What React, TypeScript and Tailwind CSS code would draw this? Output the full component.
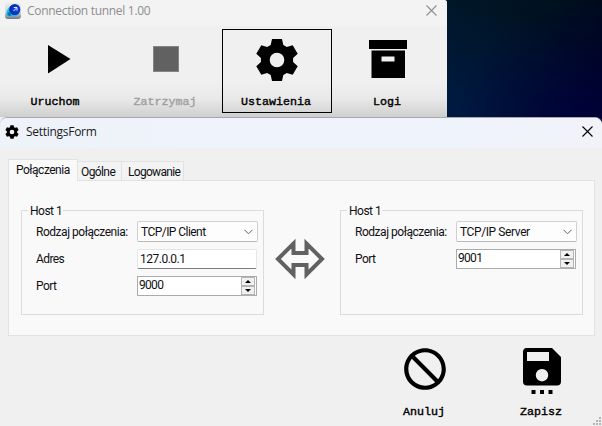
import type { ReactNode } from "react";
import { MdBlock } from "react-icons/md";

const label = "font-[Roboto,sans-serif] text-[12px] leading-[14px] text-[#101014] whitespace-nowrap";

function CloseIcon({ className }: { className: string }) {
  return (
    <svg width="11" height="11" viewBox="0 0 11 11" className={className} fill="none" stroke="currentColor" strokeWidth="1.1">
      <path d="M0.5 0.5l10 10M10.5 0.5l-10 10" />
    </svg>
  );
}

function Gear({ size }: { size: number }) {
  return (
    <svg width={size} height={size} viewBox="-25 -25 50 50" className="shrink-0">
      <path
        fillRule="evenodd"
        d="M-5-21H5L6.300-15L9.800-13L15.700-14.800L20.700-6.200L16.100-2V2L20.700 6.200L15.700 14.800L9.800 13L6.300 15L5 21H-5L-6.300 15L-9.800 13L-15.700 14.800L-20.700 6.200L-16.100 2V-2L-20.700-6.200L-15.700-14.800L-9.800-13L-6.300-15zM7.300 0a7.300 7.300 0 1 0-14.600 0a7.300 7.300 0 1 0 14.600 0z"
      />
    </svg>
  );
}

function AppIcon() {
  return (
    <svg width="16" height="16" viewBox="0 0 16 16" className="shrink-0">
      <defs>
        <linearGradient id="base" x1="0" y1="0" x2="0" y2="1">
          <stop offset="0" stopColor="#e9ecf0" />
          <stop offset="0.6" stopColor="#cfd4d8" />
          <stop offset="1" stopColor="#70767c" />
        </linearGradient>
        <radialGradient id="orb" cx="0.6" cy="0.5" r="0.6">
          <stop offset="0" stopColor="#1450e8" />
          <stop offset="1" stopColor="#0522a0" />
        </radialGradient>
      </defs>
      <rect width="16" height="16" rx="3" fill="url(#base)" />
      <path d="M5.500 3C2.500 5 0.800 9.500 1.500 12c2 2.500 10 2 12.500-1z" fill="#18b9ea" />
      <circle cx="9.800" cy="6.500" r="5.500" fill="url(#orb)" />
      <circle cx="4.500" cy="11" r="2" fill="#0877b8" />
      <path d="M8.500 8l3-3M8.800 4.500H12v3" stroke="#d7e8ff" strokeWidth="1" fill="none" />
    </svg>
  );
}

function ToolButton({ text, children, className = "", textClass = "" }: { text: string; children: ReactNode; className?: string; textClass?: string }) {
  return (
    <button className={`flex h-[84px] w-[110px] shrink-0 flex-col items-center pt-[5px] ${className}`}>
      <span className="flex h-[50px] w-[50px] items-center justify-center">{children}</span>
      <span className={`mt-[10px] font-['Liberation_Mono',monospace] text-[11.67px] leading-[14px] whitespace-nowrap [-webkit-text-stroke:0.4px] ${textClass}`}>{text}</span>
    </button>
  );
}

function Group({ children }: { children: ReactNode }) {
  return (
    <fieldset className="h-[112px] w-[243px] border border-[#dcdcdc]">
      <legend className={`ml-[6px] h-[14px] w-[35px] pt-px pl-[2px] ${label} tracking-[-0.5px]`}>Host 1</legend>
      <div className="flex flex-col gap-[6px] pt-[4px] pl-[14px]">{children}</div>
    </fieldset>
  );
}

function Field({ text, children, tracking = "tracking-[-0.6px]" }: { text: string; children: ReactNode; tracking?: string }) {
  return (
    <div className="flex h-[21px] items-center">
      <span className={`w-[101px] shrink-0 pt-px ${label} ${tracking}`}>{text}</span>
      {children}
    </div>
  );
}

function Select({ text, tracking }: { text: string; tracking: string }) {
  return (
    <div className="flex h-[21px] w-[121px] items-center justify-between rounded-[2px] border border-[#d0d0d0] border-b-[#b9b9b9] bg-[#fdfdfd] pr-[4px] pl-[3px]">
      <span className={`pt-px ${label} ${tracking}`}>{text}</span>
      <svg width="9" height="6" viewBox="0 0 9 6" fill="none" stroke="#606060"><path d="M0.500 0.800L4.500 4.800L8.500 0.800" /></svg>
    </div>
  );
}

function Spin({ down = false }: { down?: boolean }) {
  return (
    <span className="flex h-[9px] w-[14px] items-center justify-center border border-[#b4b4b4] bg-[#f0f0f0]">
      <svg width="6" height="3" viewBox="0 0 6 3"><path d={down ? "M0 0h6L3 3z" : "M0 3h6L3 0z"} /></svg>
    </span>
  );
}

function NumberBox({ value }: { value: string }) {
  return (
    <div className="flex h-[20px] w-[120px] justify-between border border-[#aaaaaf] bg-white pr-px pl-px">
      <span className={`${label} pt-px tracking-[-0.7px]`}>{value}</span>
      <span className="flex flex-col"><Spin /><Spin down /></span>
    </div>
  );
}

export default function App() {
  return (
    <div className="flex h-[426px] w-[602px] flex-col overflow-hidden bg-[#f0f0f0]">
      <div className="flex h-[117px] shrink-0 bg-[#001528]">
        <div className="h-[117px] w-[447px] shrink-0 overflow-hidden rounded-tr-[3px] bg-[#f0f0f0]">
          <div className="flex h-[26px] items-center bg-[#f3f3f3] pr-[10px] pb-[5px] pl-[5px]">
            <AppIcon />
            <span className="ml-[6px] font-['Open_Sans',sans-serif] text-[12px] leading-[18px] tracking-[-0.3px] text-[#8e8e8e]">Connection tunnel 1.00</span>
            <CloseIcon className="ml-auto text-[#8e8e8e]" />
          </div>
          <div className="flex h-[91px] bg-linear-to-b from-[#f0f0f0] from-60% via-[#e9e9e9] via-80% to-[#cfcfcf] pt-[3px]">
            <ToolButton text="Uruchom" className="pt-[6px]">
              <svg width="50" height="50" viewBox="0 0 50 50" className="translate-x-px"><path d="M17 10V38.500L39.500 24z" /></svg>
            </ToolButton>
            <ToolButton text="Zatrzymaj" className="mr-[2px] pt-[6px] text-[#a0a0a0]">
              <span className="mt-[-2px] ml-[2px] block h-[26px] w-[26px] border border-[#858585] bg-[#616161]" />
            </ToolButton>
            <ToolButton text="Ustawienia" className="border border-black" textClass="mr-[2px]"><Gear size={50} /></ToolButton>
            <ToolButton text="Logi" className="pt-[6px]">
              <svg width="50" height="50" viewBox="0 0 50 50"><path fillRule="evenodd" d="M7 5h38v9H7zM9.500 15.500h33.500v27.500H9.500zM19.500 21.500v5h13v-5z" /></svg>
            </ToolButton>
          </div>
        </div>
        <div className="h-[126px] grow bg-[radial-gradient(ellipse_at_90%_105%,#00003c_0%,transparent_70%),radial-gradient(ellipse_at_10%_95%,#001b44_0%,transparent_70%),linear-gradient(105deg,#001728_0%,#00111f_55%,#00051c_100%)]" />
      </div>

      <div className="relative flex h-[309px] shrink-0 flex-col rounded-t-[7px] border-t border-[#a9a9ad] bg-[#f0f0f0]">
        <div className="flex h-[30px] shrink-0 items-center rounded-t-[7px] bg-linear-to-r from-[#eef3fa] via-[#eff3fc] via-75% to-[#f2f3f9] pr-[9px] pb-[3px] pl-[4px]">
          <Gear size={16} />
          <span className="mt-px ml-[6px] font-['Open_Sans',sans-serif] text-[12px] leading-[18px] tracking-[-0.28px] text-[#1b1b1b]">SettingsForm</span>
          <CloseIcon className="ml-auto text-black" />
        </div>

        <div className="flex h-[32px] shrink-0 items-end pl-[8px]">
          <div className={`z-10 mb-[-1px] flex h-[22px] w-[70px] border border-b-0 border-[#e2e2e2] bg-[#f9f9f9] pt-[3px] pl-[7px] ${label} tracking-[-0.5px]`}>Połączenia</div>
          <div className={`flex h-[19px] w-[44px] border border-b-0 border-l-0 border-[#e2e2e2] bg-[#f3f3f3] pt-[3px] pl-[3px] ${label} tracking-[-0.6px]`}>Ogólne</div>
          <div className={`flex h-[19px] w-[62px] border border-b-0 border-l-0 border-[#e2e2e2] bg-[#f3f3f3] pt-[3px] pl-[6px] ${label} tracking-[-0.7px]`}>Logowanie</div>
        </div>

        <div className="ml-[8px] flex h-[156px] w-[587px] shrink-0 border border-[#e2e2e2] bg-[#f9f9f9] pt-[22px] pl-[12px]">
          <Group>
            <Field text="Rodzaj połączenia:" tracking="tracking-[-0.47px]"><Select text="TCP/IP Client" tracking="tracking-[-0.55px]" /></Field>
            <Field text="Adres">
              <div className={`h-[20px] w-[120px] rounded-[2px] border border-[#e5e5e5] border-b-[#7b7b7b] bg-white pt-[2px] pl-[2px] ${label} tracking-[-0.5px]`}>127.0.0.1</div>
            </Field>
            <Field text="Port"><NumberBox value="9000" /></Field>
          </Group>
          <svg width="50" height="42" viewBox="0 0 50 42" className="mt-[35px] mr-[15px] ml-[11px] shrink-0" fill="none" stroke="#616161" strokeWidth="4">
            <path d="M3 21L18.500 5.500V15H31.500V5.500L47 21L31.500 36.500V27H18.500V36.500z" />
          </svg>
          <Group>
            <Field text="Rodzaj połączenia:" tracking="tracking-[-0.47px]"><Select text="TCP/IP Server" tracking="tracking-[-0.4px]" /></Field>
            <Field text="Port"><NumberBox value="9001" /></Field>
          </Group>
        </div>

        <div className="flex grow justify-end pt-[3px] pr-[6px]">
          <ToolButton text="Anuluj" className="mr-[6px]" textClass="pt-px mr-[2px]"><MdBlock size={50} className="-scale-x-100" /></ToolButton>
          <ToolButton text="Zapisz" textClass="pt-px">
            <svg width="50" height="50" viewBox="0 0 50 50" className="overflow-visible">
              <path fillRule="evenodd" d="M10 4H36L45 13V37.500a4 4 0 0 1-4 4H11a4 4 0 0 1-4-4V8a4 4 0 0 1 3-4zM11 8v9h22V8zM26 25a6.200 6.200 0 1 0 0.010 0z" />
              <path d="M15.500 46h4v4h-4zM24 46h4v4h-4zM32.500 46h4v4h-4z" />
            </svg>
          </ToolButton>
        </div>
        <svg width="10" height="10" viewBox="0 0 10 10" fill="#b5b5b5" className="absolute right-0 bottom-0">
          <path d="M7 1h2v2H7zM4 4h2v2H4zM7 4h2v2H7zM1 7h2v2H1zM4 7h2v2H4zM7 7h2v2H7z" />
        </svg>
      </div>
    </div>
  );
}
